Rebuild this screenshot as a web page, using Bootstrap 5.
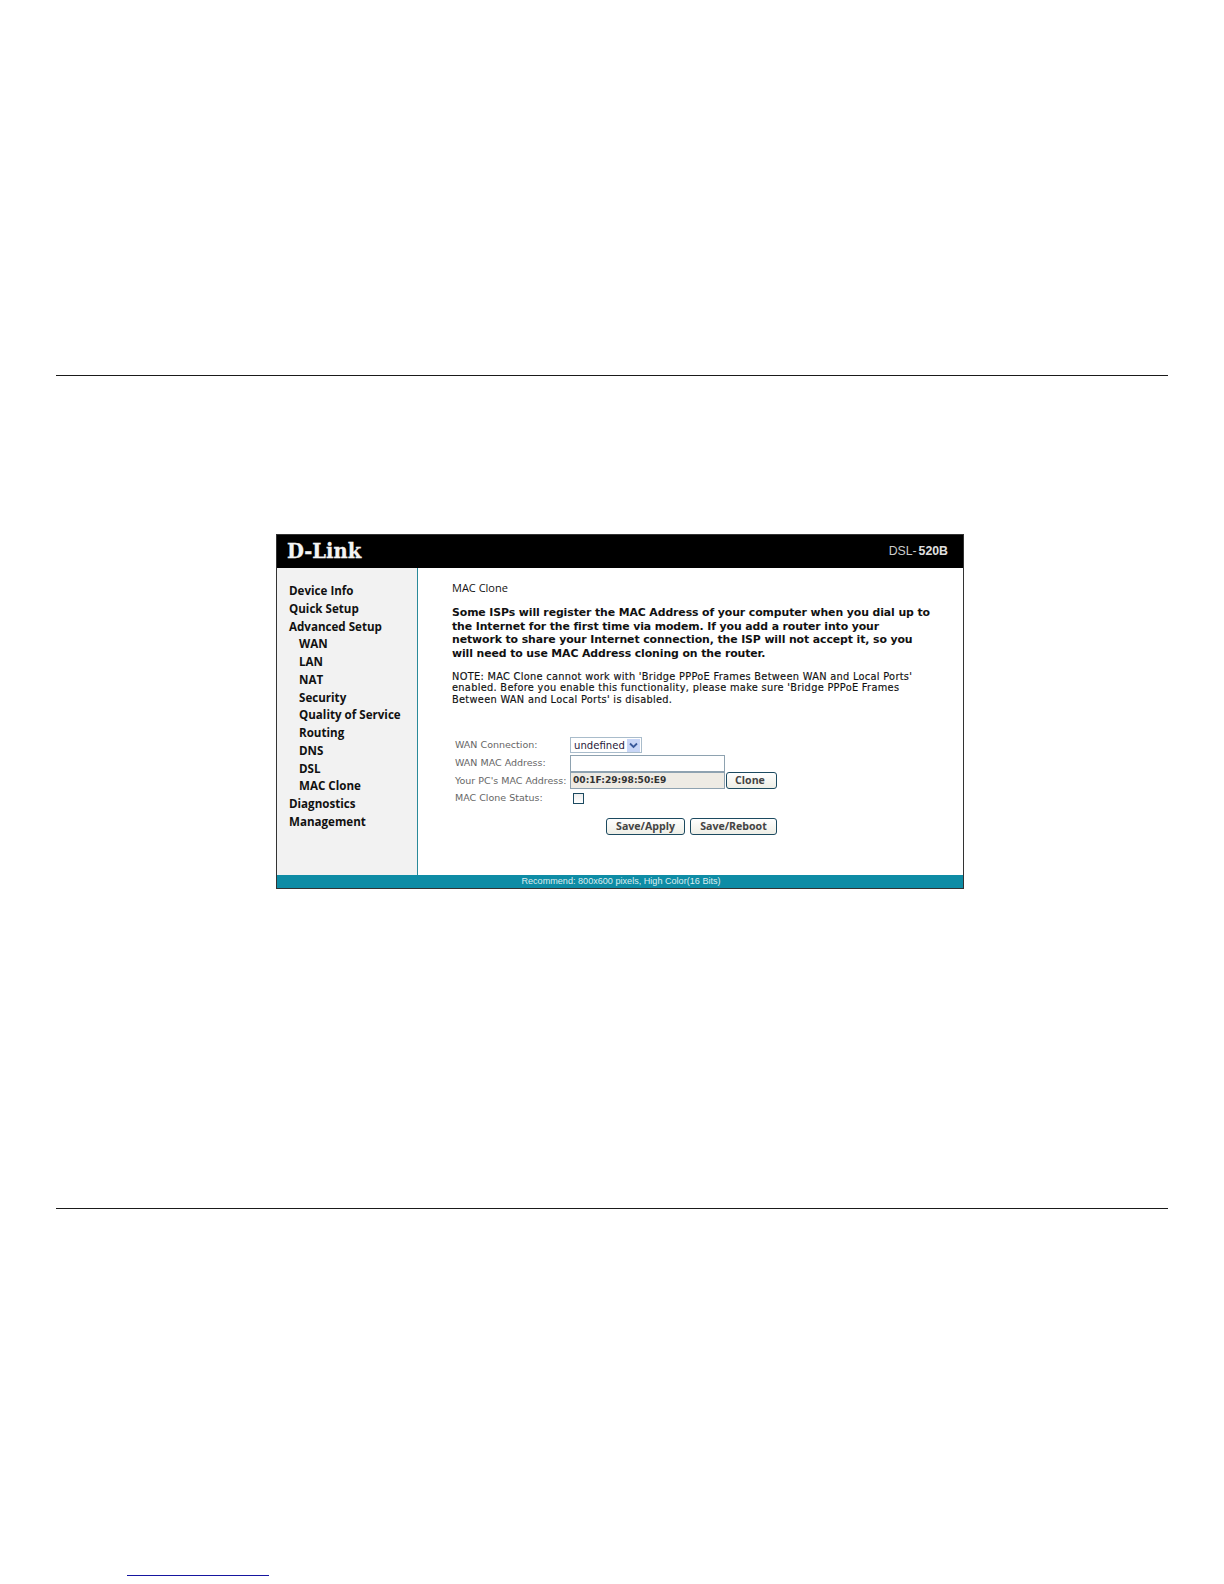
<!DOCTYPE html>
<html lang="en">
<head>
<meta charset="utf-8">
<title>MAC Clone</title>
<link rel="stylesheet" href="https://cdn.jsdelivr.net/npm/bootstrap@5.3.0/dist/css/bootstrap.min.css">
<style>
html,body{background:#fff;margin:0;padding:0}
.sheet{height:1584px;padding:375px 56px 0 56px;font-family:"DejaVu Sans",sans-serif;overflow:hidden}
.rule-line{height:1px;background:#1a1a1a}
.rule-two{margin-top:319px}
.device{width:688px;height:355px;margin-left:220px;margin-top:158px;border:1px solid #333;background:#fff;display:flex;flex-direction:column}
.top-strip{height:33px;background:#000;color:#fff;padding:0 15px 0 10px;flex:none}
.brand{font-family:"DejaVu Serif",serif;font-weight:700;font-size:19.5px;line-height:1;color:#f4f4f4;-webkit-text-stroke:.3px #f4f4f4}
.model{font-family:"Liberation Sans",sans-serif;font-size:12.3px;color:#ccc;word-spacing:-1.5px}
.model b{color:#e0e0e0;font-weight:700}
.mid{height:307px;flex:none}
.side{width:141px;background:#f2f2f2;border-right:1px solid #2a8a9a;padding:14px 0 0 12px;flex:none}
.side-link{font-family:"Open Sans",sans-serif;font-weight:700;font-size:11.6px;line-height:17.75px;color:#111;white-space:nowrap}
.side-sub{padding-left:10px}
.pane{padding:12px 0 0 34px;min-width:0;flex:1}
.pane-title{font-family:"Open Sans",sans-serif;font-size:11px;line-height:16px;color:#111}
.pane-lead{font-weight:700;font-size:10.9px;line-height:13.67px;color:#111;margin-top:10px;white-space:nowrap;letter-spacing:-.1px}
.pane-note{font-size:9.8px;line-height:11.5px;color:#111;margin-top:10px;white-space:nowrap;letter-spacing:.3px;-webkit-text-stroke:.15px #111}
.form-area{margin-top:31.5px;padding-left:3px;font-size:10px;color:#666}
.form-line{height:17.6px;display:flex;align-items:center}
.field-name{width:115px;font-size:9.5px;white-space:nowrap;flex:none}
.pick{width:72px;height:16px;border:1px solid #a9bccb;background:#fff;color:#2a1a3a;font-size:10.1px;padding-left:3px;display:flex;align-items:center;justify-content:space-between}
.pick-arrow{width:13px;height:13px;background:#c8d6f6;display:flex;align-items:center;justify-content:center;margin-right:1px}
.box-input{width:155px;height:17px;border:1px solid #8ea2b0;background:#fff;flex:none}
.box-grey{background:#eeebe4;color:#333;font-weight:700;font-size:9.1px;padding-left:2px;line-height:15px}
.soft-btn{height:17px;border:1px solid #1c4a60;border-radius:3px;background:linear-gradient(#fff,#eeeee6);color:#444;font-weight:700;font-size:10.6px;font-family:"Open Sans",sans-serif;display:flex;align-items:center;justify-content:center}
.btn-clone{width:51px;margin-left:1px;padding-right:3px}
.tick{width:11px;height:11px;border:1px solid #1c4a60;background:linear-gradient(#eee,#fff);margin-left:3px}
.btn-line{margin-top:11px;padding-left:151px;gap:5px}
.btn-save{width:79px}
.btn-reboot{width:87px}
.foot-strip{height:13px;background:#0e8ca5;color:#dfeef0;font-family:"Liberation Sans",sans-serif;font-size:9.1px;line-height:13px;text-align:center;padding-left:2px;flex:none}
.mark-link{width:142px;height:1px;background:#1616a0;margin-top:366px;margin-left:71px}
</style>
</head>
<body>
<div class="sheet">
  <div class="rule-line"></div>
  <div class="device">
    <div class="top-strip d-flex align-items-center justify-content-between">
      <span class="brand">D-Link</span>
      <span class="model">DSL- <b>520B</b></span>
    </div>
    <div class="mid d-flex">
      <nav class="side">
        <div class="side-link">Device Info</div>
        <div class="side-link">Quick Setup</div>
        <div class="side-link">Advanced Setup</div>
        <div class="side-link side-sub">WAN</div>
        <div class="side-link side-sub">LAN</div>
        <div class="side-link side-sub">NAT</div>
        <div class="side-link side-sub">Security</div>
        <div class="side-link side-sub">Quality of Service</div>
        <div class="side-link side-sub">Routing</div>
        <div class="side-link side-sub">DNS</div>
        <div class="side-link side-sub">DSL</div>
        <div class="side-link side-sub">MAC Clone</div>
        <div class="side-link">Diagnostics</div>
        <div class="side-link">Management</div>
      </nav>
      <main class="pane">
        <div class="pane-title">MAC Clone</div>
        <div class="pane-lead">Some ISPs will register the MAC Address of your computer when you dial up to<br>the Internet for the first time via modem. If you add a router into your<br>network to share your Internet connection, the ISP will not accept it, so you<br>will need to use MAC Address cloning on the router.</div>
        <div class="pane-note">NOTE: MAC Clone cannot work with 'Bridge PPPoE Frames Between WAN and Local Ports'<br>enabled. Before you enable this functionality, please make sure 'Bridge PPPoE Frames<br>Between WAN and Local Ports' is disabled.</div>
        <div class="form-area">
          <div class="form-line"><span class="field-name">WAN Connection:</span>
            <div class="pick"><span>undefined</span><span class="pick-arrow"><svg width="9" height="7" viewBox="0 0 9 7"><path d="M1 1.5 4.5 5 8 1.5" fill="none" stroke="#3a5a9a" stroke-width="1.8"/></svg></span></div>
          </div>
          <div class="form-line"><span class="field-name">WAN MAC Address:</span><div class="box-input"></div></div>
          <div class="form-line"><span class="field-name">Your PC's MAC Address:</span><div class="box-input box-grey">00:1F:29:98:50:E9</div><div class="soft-btn btn-clone">Clone</div></div>
          <div class="form-line"><span class="field-name">MAC Clone Status:</span><div class="tick"></div></div>
          <div class="form-line btn-line"><div class="soft-btn btn-save">Save/Apply</div><div class="soft-btn btn-reboot">Save/Reboot</div></div>
        </div>
      </main>
    </div>
    <div class="foot-strip">Recommend: 800x600 pixels, High Color(16 Bits)</div>
  </div>
  <div class="rule-line rule-two"></div>
  <div class="mark-link"></div>
</div>
<script src="https://cdn.jsdelivr.net/npm/bootstrap@5.3.0/dist/js/bootstrap.bundle.min.js"></script>
</body>
</html>
